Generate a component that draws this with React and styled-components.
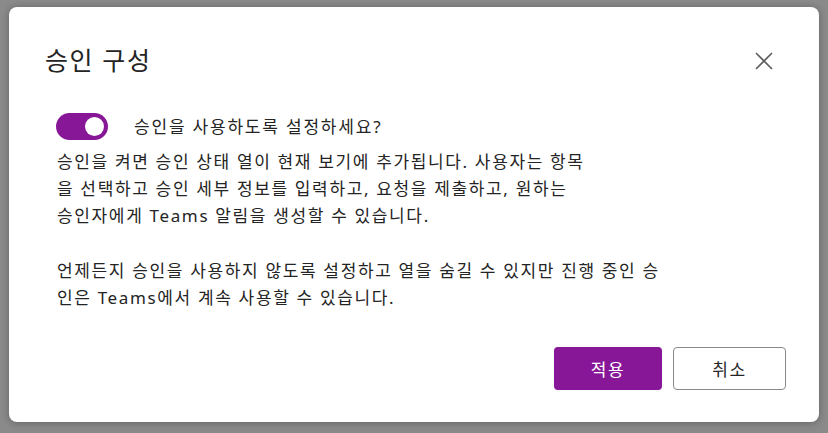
import React, { useState } from "react";
import styled, { createGlobalStyle } from "styled-components";

const Global = createGlobalStyle`
  html, body { margin: 0; padding: 0; }
  body {
    background: #8a8a8a;
    font-family: "Noto Sans", "Noto Sans CJK KR", sans-serif;
    color: #242424;
  }
`;

const Overlay = styled.div`
  width: 828px;
  height: 433px;
  box-sizing: border-box;
  padding: 7px 9px 11px 9px;
  background: #8a8a8a;
`;

const Dialog = styled.div`
  width: 810px;
  height: 415px;
  box-sizing: border-box;
  background: #ffffff;
  border-radius: 8px;
  box-shadow: 0 0 6px rgba(0, 0, 0, 0.18), 0 2px 10px rgba(0, 0, 0, 0.12);
  display: flex;
  flex-direction: column;
`;

const Header = styled.div`
  display: flex;
  align-items: center;
  justify-content: space-between;
  padding: 37px 40px 0 36px;
  height: 32px;
`;

const Title = styled.h2`
  margin: 0;
  font-size: 25px;
  font-weight: 400;
  line-height: 32px;
  letter-spacing: 1.6px;
`;

const CloseButton = styled.button`
  width: 30px;
  height: 30px;
  padding: 0;
  border: none;
  background: transparent;
  display: flex;
  align-items: center;
  justify-content: center;
  cursor: pointer;
  margin-top: 2px;
`;

const Content = styled.div`
  padding: 0 40px 0 47px;
  margin-top: 37px;
`;

const ToggleRow = styled.label`
  display: flex;
  align-items: center;
  gap: 26px;
  height: 27px;
  cursor: pointer;
`;

const Track = styled.span`
  position: relative;
  width: 52px;
  height: 27px;
  box-sizing: border-box;
  border-radius: 14px;
  background: ${(p) => (p.$on ? "#881798" : "#ffffff")};
  border: ${(p) => (p.$on ? "none" : "1px solid #616161")};
  flex: none;
`;

const Knob = styled.span`
  position: absolute;
  top: 4px;
  left: ${(p) => (p.$on ? "29px" : "4px")};
  width: 19px;
  height: 19px;
  border-radius: 50%;
  background: ${(p) => (p.$on ? "#ffffff" : "#616161")};
`;

const Label = styled.span`
  font-size: 17px;
  letter-spacing: 1.8px;
  line-height: 27px;
`;

const Desc = styled.p`
  margin: ${(p) => (p.$gap ? "27.2px" : "8px")} 0 0 1px;
  font-size: 17px;
  line-height: 27.2px;
  letter-spacing: 1.65px;
  white-space: nowrap;
`;

const Footer = styled.div`
  margin-top: auto;
  display: flex;
  justify-content: flex-end;
  gap: 11px;
  padding: 0 33px 32px 0;
`;

const Button = styled.button`
  width: ${(p) => p.$w}px;
  height: 43px;
  box-sizing: border-box;
  border-radius: 4px;
  font-family: "Noto Sans", "Noto Sans CJK KR", sans-serif;
  font-size: 17px;
  letter-spacing: 1.6px;
  cursor: pointer;
  background: ${(p) => (p.$primary ? "#881798" : "#ffffff")};
  color: ${(p) => (p.$primary ? "#ffffff" : "#242424")};
  border: ${(p) => (p.$primary ? "none" : "1px solid #8a8a8a")};
`;

export default function App() {
  const [on, setOn] = useState(true);
  return (
    <>
      <Global />
      <Overlay>
        <Dialog>
          <Header>
            <Title>승인 구성</Title>
            <CloseButton aria-label="닫기">
              <svg width="18" height="18" viewBox="0 0 18 18">
                <path d="M1 1 L17 17 M17 1 L1 17" stroke="#5c5c5c" strokeWidth="1.6" fill="none" />
              </svg>
            </CloseButton>
          </Header>
          <Content>
            <ToggleRow onClick={() => setOn(!on)}>
              <Track $on={on}>
                <Knob $on={on} />
              </Track>
              <Label>승인을 사용하도록 설정하세요?</Label>
            </ToggleRow>
            <Desc>
              승인을 켜면 승인 상태 열이 현재 보기에 추가됩니다. 사용자는 항목
              <br />을 선택하고 승인 세부 정보를 입력하고, 요청을 제출하고, 원하는
              <br />승인자에게 Teams 알림을 생성할 수 있습니다.
            </Desc>
            <Desc $gap>
              언제든지 승인을 사용하지 않도록 설정하고 열을 숨길 수 있지만 진행 중인 승
              <br />인은 Teams에서 계속 사용할 수 있습니다.
            </Desc>
          </Content>
          <Footer>
            <Button $primary $w={108}>적용</Button>
            <Button $w={113}>취소</Button>
          </Footer>
        </Dialog>
      </Overlay>
    </>
  );
}
